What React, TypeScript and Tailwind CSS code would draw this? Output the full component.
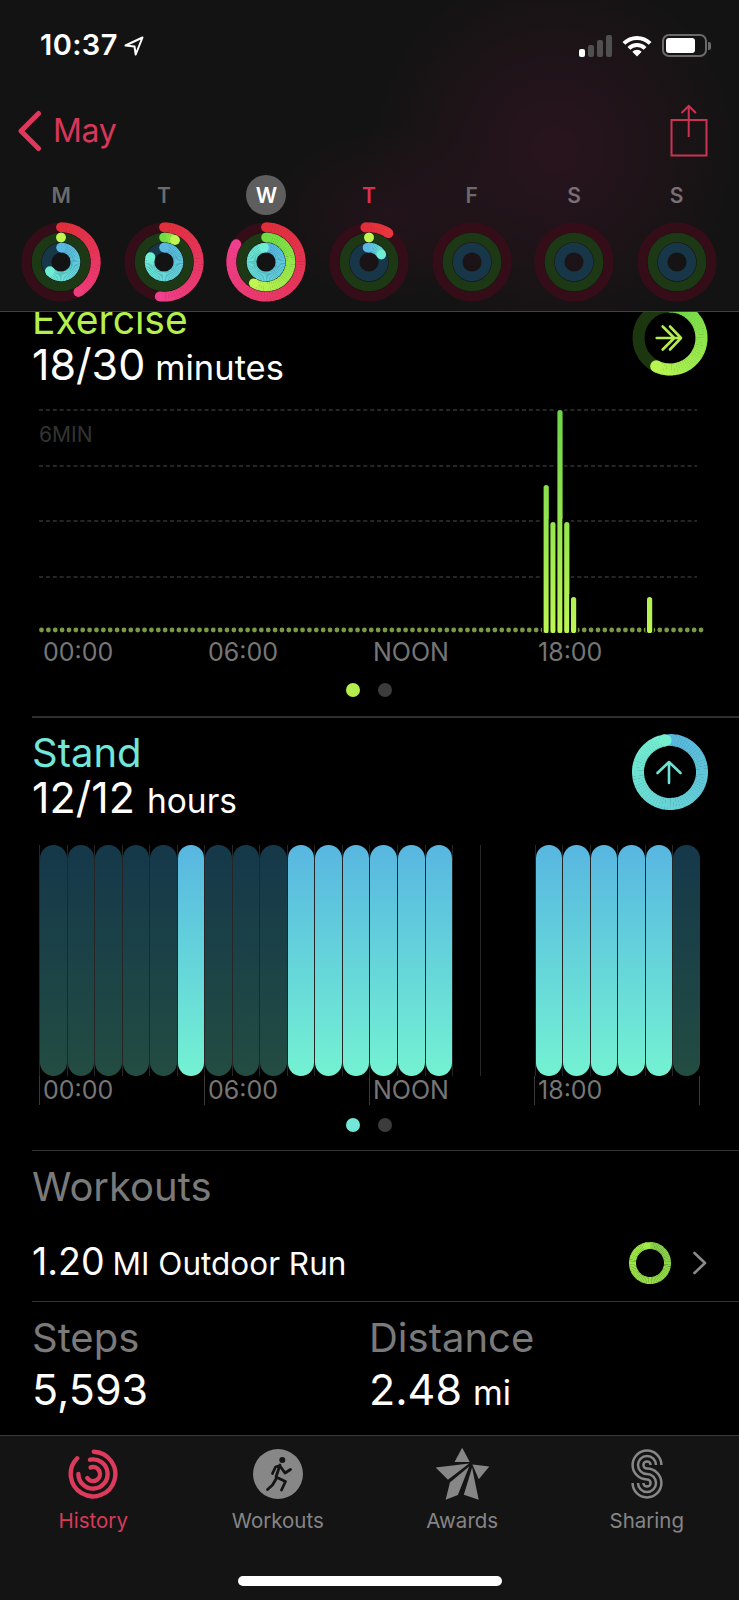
import React from "react"

function mix(a: string, b: string, t: number) {
  const pa = [1, 3, 5].map((i) => parseInt(a.slice(i, i + 2), 16))
  const pb = [1, 3, 5].map((i) => parseInt(b.slice(i, i + 2), 16))
  return `rgb(${pa.map((v, i) => Math.round(v + (pb[i] - v) * t)).join(",")})`
}

function pt(c: number, r: number, deg: number) {
  const a = (deg * Math.PI) / 180
  return [c + r * Math.sin(a), c - r * Math.cos(a)]
}

// gradient arc drawn as short segments so the colour follows the angle
function Arc({ c, r, w, sweep, start = 0, from, to }: { c: number; r: number; w: number; sweep: number; start?: number; from: string; to: string }) {
  const n = Math.max(1, Math.ceil(sweep / 5))
  const segs = []
  if (sweep > 0) {
    for (let i = 0; i < n; i++) {
      const a0 = start + (sweep * i) / n
      const a1 = start + (sweep * (i + 1)) / n + (i < n - 1 ? 0.6 : 0)
      const [x0, y0] = pt(c, r, a0)
      const [x1, y1] = pt(c, r, a1)
      segs.push(<path key={i} d={`M${x0} ${y0}A${r} ${r} 0 0 1 ${x1} ${y1}`} fill="none" stroke={mix(from, to, i / n)} strokeWidth={w} />)
    }
  }
  const [sx, sy] = pt(c, r, start)
  const [ex, ey] = pt(c, r, start + sweep)
  return (
    <g>
      <circle cx={sx} cy={sy} r={w / 2} fill={from} />
      {segs}
      <circle cx={ex} cy={ey} r={w / 2} fill={to} />
    </g>
  )
}

type Day = { label: string; red?: number; green?: number; blue?: number; start?: number; redEnd?: string }

const days: Day[] = [
  { label: "M", red: 150, green: 0, blue: 231, redEnd: "#ee3c7c" },
  { label: "T", red: 187, green: 27, blue: 290, redEnd: "#f03f8c" },
  { label: "W", red: 301, green: 210, blue: 352, redEnd: "#f03f8c" },
  { label: "T", red: 40, green: 0, blue: 65, start: -6, redEnd: "#e8363f" },
  { label: "F" },
  { label: "S" },
  { label: "S" },
]

function DayRing({ d }: { d: Day }) {
  return (
    <svg width="80" height="80" viewBox="0 0 80 80">
      <circle cx="40" cy="40" r="34.7" fill="none" stroke="#340d19" strokeWidth="9.8" />
      <circle cx="40" cy="40" r="24.5" fill="none" stroke="#1d3814" strokeWidth="9.6" />
      <circle cx="40" cy="40" r="14.4" fill="none" stroke="#173749" strokeWidth="9.6" />
      {d.red !== undefined && <Arc c={40} r={34.7} w={9.8} sweep={d.red} start={d.start} from="#e02f3a" to={d.redEnd ?? "#f03f8c"} />}
      {d.green !== undefined && <Arc c={40} r={24.5} w={9.6} sweep={d.green} from="#6fdc42" to="#c0f552" />}
      {d.blue !== undefined && <Arc c={40} r={14.4} w={9.6} sweep={d.blue} start={d.start} from="#58b8e2" to="#6eeed4" />}
    </svg>
  )
}

function StatusBar() {
  return (
    <div className="flex h-[60px] items-start justify-between pl-[40px] pr-[28px] pt-[29px]">
      <div className="flex items-center gap-[6px]">
        <span className="text-[29px] font-semibold leading-[32px] tracking-[0.4px] text-white">10:37</span>
        <svg width="20" height="20" viewBox="0 0 20 20" className="mt-[1px]">
          <path d="M18.5 1.5 1.5 9.5l9 1 1.2 8z" fill="none" stroke="#fff" strokeWidth="2" strokeLinejoin="round" />
        </svg>
      </div>
      <div className="flex items-end gap-[10px] pt-[5px]">
        <div className="flex h-[22px] items-end gap-[3px]">
          <div className="h-[8px] w-[6px] rounded-[2px] bg-white" />
          <div className="h-[12px] w-[6px] rounded-[2px] bg-[#4f4f4f]" />
          <div className="h-[17px] w-[6px] rounded-[2px] bg-[#4f4f4f]" />
          <div className="h-[22px] w-[6px] rounded-[2px] bg-[#4f4f4f]" />
        </div>
        <svg width="30" height="22" viewBox="0 0 30 22">
          <path d="M1.9 8.4a18.5 18.5 0 0 1 26.2 0M6.9 13.4a11.5 11.5 0 0 1 16.2 0" fill="none" stroke="#fff" strokeWidth="4" />
          <path d="M15 21.5 10.3 16.7a6.6 6.6 0 0 1 9.4 0z" fill="#fff" />
        </svg>
        <div className="flex items-center">
          <div className="flex h-[23px] w-[45px] items-center rounded-[7px] border-2 border-[#6a6a6a] p-[2px]">
            <div className="h-[15px] w-[29px] rounded-[3px] bg-white" />
          </div>
          <div className="ml-[1px] h-[8px] w-[3px] rounded-r-[2px] bg-[#6a6a6a]" />
        </div>
      </div>
    </div>
  )
}

function Header() {
  return (
    <header className="h-[312px] border-b border-[#414141] bg-[#131313] bg-[radial-gradient(ellipse_190px_190px_at_555px_150px,#29141d,transparent),radial-gradient(ellipse_130px_90px_at_390px_215px,#22131a,transparent)]">
      <StatusBar />
      <div className="flex h-[115px] items-start justify-between pl-[17px] pr-[31px] pt-[44px]">
        <div className="flex items-center gap-[11px] pt-[6px]">
          <svg width="25" height="42" viewBox="0 0 25 42">
            <path d="M21.5 3.5 4 21l17.5 17.5" fill="none" stroke="#e0385c" strokeWidth="5" strokeLinecap="round" strokeLinejoin="round" />
          </svg>
          <span className="text-[32px] leading-[36px] tracking-[-0.3px] text-[#d9365a]">May</span>
        </div>
        <svg width="38" height="53" viewBox="0 0 38 53">
          <path d="M11 16H1.500V51.500H36.500V16H26M18.700 33V2M11.500 9 18.700 2l7.200 7" fill="none" stroke="#c93452" strokeWidth="2" />
          <path d="M11 16H26" fill="none" stroke="#c93452" strokeWidth="2" />
        </svg>
      </div>
      <div className="grid grid-cols-7 pl-[10px] pr-[11px]">
        {days.map((d, i) => (
          <div key={i} className="flex flex-col items-center">
            <div
              className={
                "flex h-[40px] w-[40px] items-center justify-center rounded-full text-[21px] font-semibold leading-none " +
                (i === 2 ? "bg-[#5e5e5e] text-white" : i === 3 ? "text-[#dc2f55]" : i > 4 ? "text-[#796f74]" : "text-[#6b6b6b]")
              }
            >
              {d.label}
            </div>
            <div className="mt-[7px]">
              <DayRing d={d} />
            </div>
          </div>
        ))}
      </div>
    </header>
  )
}

function Pager({ color }: { color: string }) {
  return (
    <div className="flex justify-center gap-[18px] pr-[1px]">
      <div className={"h-[14px] w-[14px] rounded-full " + color} />
      <div className="h-[14px] w-[14px] rounded-full bg-[#3c3c3c]" />
    </div>
  )
}

const exerciseBars = [
  { x: 546.2, top: 485 },
  { x: 553, top: 522 },
  { x: 560, top: 410 },
  { x: 566.8, top: 522 },
  { x: 573.6, top: 597 },
  { x: 649.6, top: 597 },
]

function ExerciseChart() {
  const dots = []
  for (let i = 0; i < 97; i++) {
    dots.push(<circle key={i} cx={41.5 + i * 6.87} cy="630" r="2.4" fill="#7b9a45" />)
  }
  return (
    <div className="relative ml-[36px] mt-[15px] h-[230px] w-[668px]">
      <svg width="668" height="230" viewBox="36 405 668 230" className="block">
        <defs>
          <linearGradient id="ex" gradientUnits="userSpaceOnUse" x1="0" y1="410" x2="0" y2="632">
            <stop offset="0" stopColor="#6cd44a" />
            <stop offset="1" stopColor="#bcf654" />
          </linearGradient>
        </defs>
        {[410, 466, 521, 577].map((y) => (
          <line key={y} x1="39" x2="697" y1={y} y2={y} stroke="#4d4d4d" strokeWidth="1" strokeDasharray="4 2.9" />
        ))}
        {dots}
        {exerciseBars.map((b) => (
          <g key={b.x}>
            <rect x={b.x - 4.2} y={b.top - 3} width="8.4" height={632 - b.top + 3} fill="#000" />
            <rect x={b.x - 2.6} y={b.top} width="5.2" height={633 - b.top} rx="2.6" fill="url(#ex)" />
          </g>
        ))}
      </svg>
      <span className="absolute left-[3px] top-[20px] text-[21px] leading-[20px] text-[#333333]">6MIN</span>
    </div>
  )
}

const standBars = [0, 0, 0, 0, 0, 1, 0, 0, 0, 1, 1, 1, 1, 1, 1, -1, -1, -1, 1, 1, 1, 1, 1, 0]

function StandChart() {
  return (
    <div className="ml-[39px] mt-[21px] w-[661px]">
      <div className="grid h-[231px] grid-cols-[repeat(24,1fr)]">
        {standBars.map((v, i) => (
          <div key={i} className={"border-l " + (i === 17 ? "border-transparent" : "border-[#262626]")}>
            {v >= 0 && (
              <div
                className={
                  "h-full rounded-full bg-gradient-to-b " +
                  (v === 1 ? "from-[#58b6e0] to-[#74f2d2]" : "from-[#15384a] to-[#234c42]")
                }
              />
            )}
          </div>
        ))}
      </div>
      <div className="grid h-[29px] grid-cols-4 border-r border-[#3a3a3a]">
        {["00:00", "06:00", "NOON", "18:00"].map((t) => (
          <div key={t} className="border-l border-[#3a3a3a] pl-[3px] text-[25px] leading-[29px] text-[#767676]">
            {t}
          </div>
        ))}
      </div>
    </div>
  )
}

function ExerciseRing() {
  return (
    <svg width="76" height="76" viewBox="0 0 76 76" className="shrink-0">
      <circle cx="38" cy="38" r="31.5" fill="none" stroke="#1c3610" strokeWidth="12" />
      <Arc c={38} r={31.5} w={12} sweep={206} from="#6cd848" to="#b8f552" />
      <path d="M24.700 38H47M30.700 26.500 42.300 38 30.700 49.500M38 26.500 49 38 38 49.500" fill="none" stroke="#b4ee4e" strokeWidth="2.6" strokeLinecap="round" strokeLinejoin="round" />
    </svg>
  )
}

function StandRing() {
  return (
    <svg width="76" height="76" viewBox="0 0 76 76" className="shrink-0">
      <Arc c={38} r={32} w={12} sweep={352} from="#58b6dc" to="#74f0d0" />
      <path d="M37 49V28.500M25.500 39 37 28l11.500 11" fill="none" stroke="#6fe2d6" strokeWidth="2.6" strokeLinecap="round" strokeLinejoin="round" />
    </svg>
  )
}

function HistoryIcon() {
  const c = 25
  const arc = (r: number, a: number, b: number) => {
    const [x0, y0] = pt(c, r, a)
    const [x1, y1] = pt(c, r, b)
    return `M${x0} ${y0}A${r} ${r} 0 ${b - a > 180 ? 1 : 0} 1 ${x1} ${y1}`
  }
  return (
    <svg width="50" height="50" viewBox="0 0 50 50">
      <path d={arc(22.3, 2, 315)} fill="none" stroke="#dd3a5c" strokeWidth="4.4" strokeLinecap="round" />
      <path d={arc(14.6, -12, 270)} fill="none" stroke="#dd3a5c" strokeWidth="4.4" strokeLinecap="round" />
      <path d={arc(7, -20, 235)} fill="none" stroke="#dd3a5c" strokeWidth="4.4" strokeLinecap="round" />
    </svg>
  )
}

function WorkoutsIcon() {
  return (
    <svg width="50" height="50" viewBox="0 0 50 50">
      <circle cx="25" cy="25" r="25" fill="#878787" />
      <circle cx="29.300" cy="11" r="3" fill="#141414" />
      <path d="M27 16 23 28 32.500 32.500 28.500 41M27 16.500l-4.500 1.500-3 6.500M27 17l5 7 5.500-3.500M23 30l-3.500 6-5 4.500" fill="none" stroke="#141414" strokeWidth="2.8" strokeLinejoin="round" strokeLinecap="round" />
    </svg>
  )
}

function AwardsIcon() {
  return (
    <svg width="57" height="55" viewBox="190 50 172 166">
      <g fill="#878787">
        <path d="M275 55 298 98 252 98z" />
        <path d="M195 115 296 103 232 152z" />
        <path d="M357 112 306 106 325 150z" />
        <path d="M296 112 238 160 225 212 262 198z" />
        <path d="M305 115 280 197 325 212 312 150z" />
      </g>
    </svg>
  )
}

function SharingIcon() {
  const s = (r: number) => {
    const q = 18 - r
    return `M${16 + r} 16A${r} ${r} 0 1 0 16 ${16 + r}A${q} ${q} 0 1 1 ${16 - q} 34`
  }
  return (
    <svg width="32" height="50" viewBox="0 0 32 50">
      <g fill="none" stroke="#878787" strokeWidth="2.5">
        <path d={s(14.4)} />
        <path d={s(9)} />
        <path d={s(3.6)} />
      </g>
    </svg>
  )
}

const tabs = [
  { label: "History", icon: <HistoryIcon />, cls: "text-[#d93a5a]" },
  { label: "Workouts", icon: <WorkoutsIcon />, cls: "text-[#858585]" },
  { label: "Awards", icon: <AwardsIcon />, cls: "text-[#858585]" },
  { label: "Sharing", icon: <SharingIcon />, cls: "text-[#858585]" },
]

function TabBar() {
  return (
    <footer className="flex h-[165px] flex-col border-t border-[#3a3a3a] bg-[#141414]">
      <div className="grid grid-cols-4 pl-[1px] pt-[10px]">
        {tabs.map((t) => (
          <div key={t.label} className="flex flex-col items-center">
            <div className="flex h-[55px] items-center">{t.icon}</div>
            <span className={"mt-[8px] text-[20.5px] leading-[24px] " + t.cls}>{t.label}</span>
          </div>
        ))}
      </div>
      <div className="mx-auto mt-[43px] h-[10px] w-[264px] rounded-full bg-white" />
    </footer>
  )
}

export default function App() {
  return (
    <div className="flex h-[1600px] w-[739px] flex-col overflow-hidden bg-black font-['Inter',sans-serif] text-white">
      <Header />
      <main className="flex-1 overflow-hidden">
        <section className="-mt-[12px] h-[416px]">
          <div className="flex justify-between pl-[32px] pr-[31px]">
            <div className="-mt-[3px]">
              <div className="text-[39px] leading-[45px] text-[#b4ef4e]">Exercise</div>
              <div className="text-[43px] leading-[45px]">
                18/30<span className="ml-[10px] text-[34.5px]">minutes</span>
              </div>
            </div>
            <ExerciseRing />
          </div>
          <ExerciseChart />
          <div className="ml-[43px] mt-[3px] grid w-[660px] grid-cols-4 text-[25px] leading-[29px] text-[#767676]">
            <span>00:00</span>
            <span>06:00</span>
            <span>NOON</span>
            <span>18:00</span>
          </div>
          <div className="mt-[16px]">
            <Pager color="bg-[#b4ef4e]" />
          </div>
        </section>
        <section className="ml-[32px] h-[434px] border-t-2 border-[#2e2e2e]">
          <div className="-ml-[32px]">
            <div className="flex justify-between pl-[32px] pr-[31px] pt-[16px]">
              <div className="-mt-[4px]">
                <div className="text-[40px] leading-[45px] text-[#72e6d8]">Stand</div>
                <div className="text-[43px] leading-[45px]">
                  12/12<span className="ml-[12px] text-[33.5px]">hours</span>
                </div>
              </div>
              <StandRing />
            </div>
            <StandChart />
            <div className="mt-[13px]">
              <Pager color="bg-[#72e6d8]" />
            </div>
          </div>
        </section>
        <section className="ml-[32px] h-[151px] border-t border-[#333333]">
          <div className="pt-[13px] text-[40px] leading-[46px] text-[#7a7a7a]">Workouts</div>
          <div className="mt-[29px] flex items-center justify-between pr-[31px]">
            <div className="text-[37.5px] leading-[46px]">
              1.20<span className="ml-[8px] text-[31.5px]">MI Outdoor Run</span>
            </div>
            <div className="flex items-center gap-[21px]">
              <svg width="42" height="42" viewBox="0 0 42 42">
                <Arc c={21} r={17.5} w={7} sweep={350} from="#88d24a" to="#a2ec48" />
              </svg>
              <svg width="16" height="24" viewBox="0 0 16 24">
                <path d="M2.500 2 13 12 2.500 22" fill="none" stroke="#8a8a8a" strokeWidth="2.6" strokeLinecap="round" strokeLinejoin="round" />
              </svg>
            </div>
          </div>
        </section>
        <section className="ml-[32px] flex h-[133px] border-t border-[#333333]">
          <div className="w-[337px]">
            <div className="pt-[13px] text-[40px] leading-[46px] text-[#7a7a7a]">Steps</div>
            <div className="pt-[5px] text-[43px] leading-[46px]">5,593</div>
          </div>
          <div>
            <div className="pt-[13px] text-[40px] leading-[46px] text-[#7a7a7a]">Distance</div>
            <div className="pt-[5px] text-[43px] leading-[46px]">
              2.48<span className="ml-[11px] text-[34px]">mi</span>
            </div>
          </div>
        </section>
      </main>
      <TabBar />
    </div>
  )
}
